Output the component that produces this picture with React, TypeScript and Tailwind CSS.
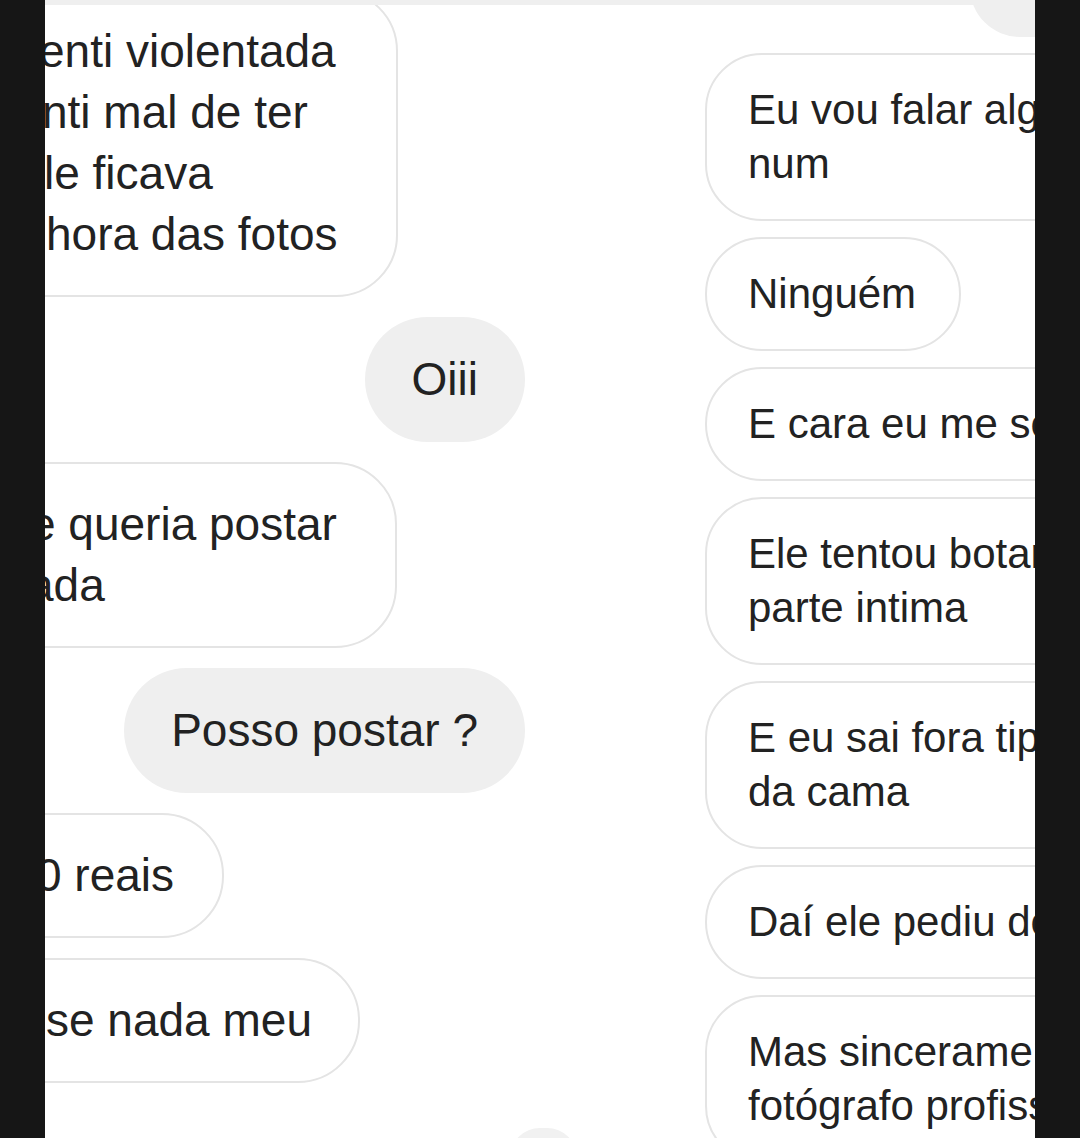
const font = { fontFamily: '"Liberation Sans", Arial, sans-serif' };

function LeftBubble({ lines, pr }: { lines: { text: string; cut: string }[]; pr: string }) {
  return (
    <div className={`self-start shrink-0 -ml-[60px] pl-[60px] ${pr} py-[30px] bg-white border-2 border-[#e4e4e4] rounded-[62px]`}>
      {lines.map((l, i) => (
        <div key={i} className={`whitespace-nowrap ${l.cut}`}>
          {l.text}
        </div>
      ))}
    </div>
  );
}

function SentBubble({ text }: { text: string }) {
  return (
    <div className="self-end shrink-0 px-[47px] py-[32px] bg-[#efefef] rounded-[63px] whitespace-nowrap">
      {text}
    </div>
  );
}

function RightBubble({ lines }: { lines: string[] }) {
  return (
    <div className="shrink-0 pl-[41px] pr-[43px] py-[28px] bg-white border-2 border-[#e4e4e4] rounded-[57px]">
      {lines.map((l, i) => (
        <div key={i} className="whitespace-nowrap">
          {l}
        </div>
      ))}
    </div>
  );
}

export default function App() {
  return (
    <div className="w-[1080px] h-[1138px] flex bg-[#161616] overflow-hidden" style={font}>
      <div className="w-[45px] shrink-0" />

      <div className="relative w-[990px] h-full shrink-0 bg-white overflow-hidden flex items-start text-[#222222]">
        <div className="absolute top-0 left-0 right-0 h-[5px] bg-[#efefef]" />

        {/* left side of the chat */}
        <div className="w-[480px] shrink-0 -mt-[11px] flex flex-col items-end gap-[20px] text-[46px] leading-[61px]">
          <LeftBubble
            pr="pr-[58px]"
            lines={[
              { text: 'enti violentada', cut: '-ml-[8px]' },
              { text: 'nti mal de ter', cut: '-ml-[5px]' },
              { text: 'le ficava', cut: '-ml-[3px]' },
              { text: 'hora das fotos', cut: '-ml-[1px]' },
            ]}
          />
          <SentBubble text="Oiii" />
          <LeftBubble
            pr="pr-[58px]"
            lines={[
              { text: 'e queria postar', cut: '-ml-[17px]' },
              { text: 'ada', cut: '-ml-[19px]' },
            ]}
          />
          <SentBubble text="Posso postar ?" />
          <LeftBubble pr="pr-[48px]" lines={[{ text: '0 reais', cut: '-ml-[11px]' }]} />
          <LeftBubble pr="pr-[46px]" lines={[{ text: 'se nada meu', cut: '-ml-[1px]' }]} />
          <div className="shrink-0 w-[67px] h-[60px] mt-[25px] -mr-[52px] rounded-full bg-[#f1f1f1]" />
        </div>

        {/* right side of the chat */}
        <div className="ml-[180px] w-[700px] shrink-0 flex flex-col items-start gap-[16px] text-[42px] leading-[54px]">
          <div className="shrink-0 ml-[265px] -mt-[63px] w-[240px] h-[100px] rounded-[56px] bg-[#efefef]" />
          <RightBubble lines={['Eu vou falar algo que eu nunca contei', 'num']} />
          <RightBubble lines={['Ninguém']} />
          <RightBubble lines={['E cara eu me senti muito mal']} />
          <RightBubble lines={['Ele tentou botar a mão na minha', 'parte intima']} />
          <RightBubble lines={['E eu sai fora tipo levantei', 'da cama']} />
          <RightBubble lines={['Daí ele pediu desculpas']} />
          <RightBubble lines={['Mas sinceramente ele não parece um', 'fotógrafo profissional']} />
        </div>
      </div>

      <div className="w-[45px] shrink-0" />
    </div>
  );
}
